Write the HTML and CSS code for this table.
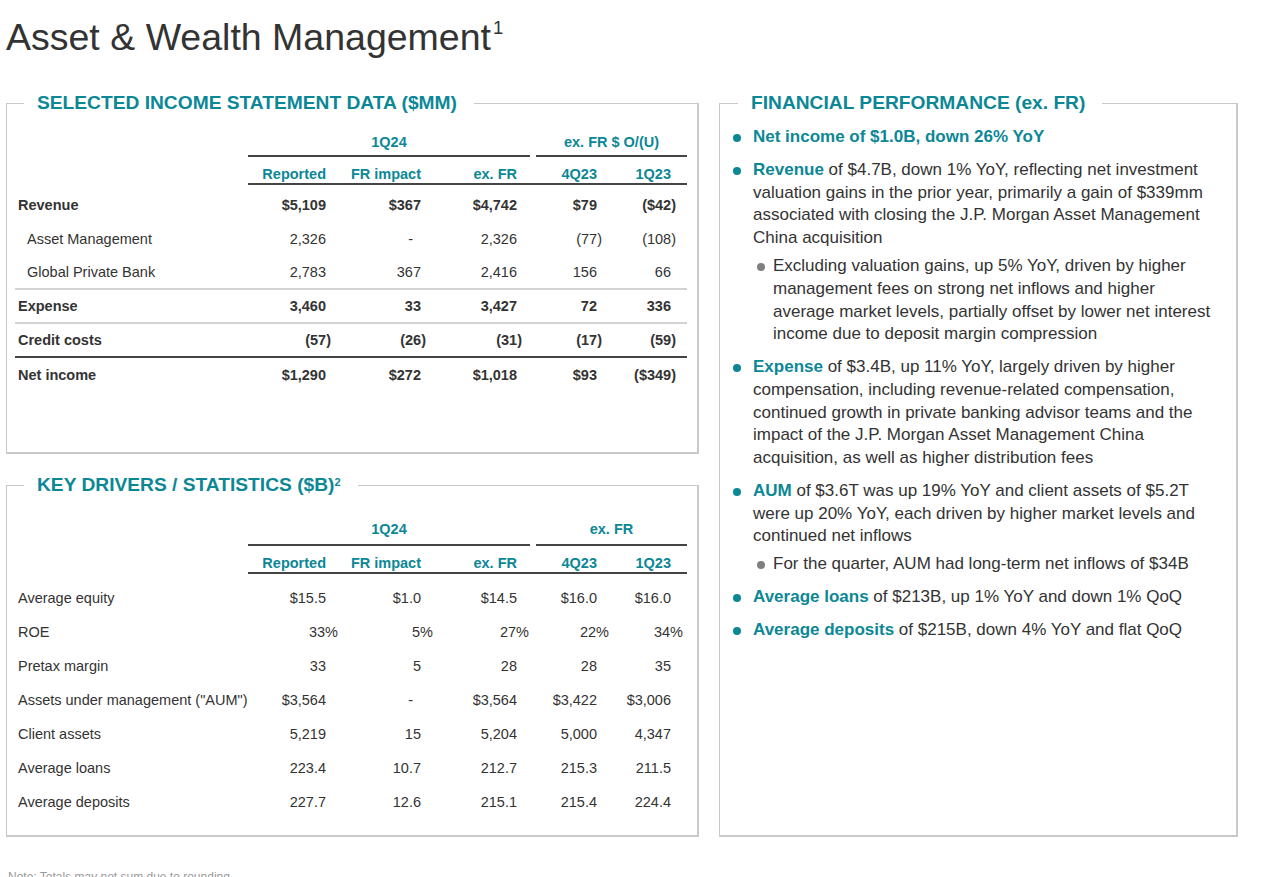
FILE: index.html
```html
<!DOCTYPE html>
<html lang="en">
<head>
<meta charset="utf-8">
<title>Asset &amp; Wealth Management</title>
<link rel="stylesheet" href="styles.css">
</head>
<body>
<div class="page">
  <h1 class="title">Asset &amp; Wealth Management<sup class="title-sup">1</sup></h1>
  <div class="columns">
    <div class="left-col">
      <fieldset class="panel panel-income">
        <legend class="panel-title">SELECTED INCOME STATEMENT DATA ($MM)</legend>
        <div class="tbl tbl-income">
          <div class="grow"><span></span><span class="grp grp-a">1Q24</span><span class="grp grp-b">ex. FR $ O/(U)</span></div>
          <div class="row colhead"><span></span><span>Reported</span><span>FR impact</span><span>ex. FR</span><span>4Q23</span><span>1Q23</span></div>
          <div class="tbody">
            <div class="row bold"><span class="lbl">Revenue</span><span>$5,109</span><span>$367</span><span>$4,742</span><span>$79</span><span><span class="neg">($42)</span></span></div>
            <div class="row"><span class="lbl sub">Asset Management</span><span>2,326</span><span><span class="dash">-</span></span><span>2,326</span><span><span class="neg">(77)</span></span><span><span class="neg">(108)</span></span></div>
            <div class="row line-light"><span class="lbl sub">Global Private Bank</span><span>2,783</span><span>367</span><span>2,416</span><span>156</span><span>66</span></div>
            <div class="row bold line-light"><span class="lbl">Expense</span><span>3,460</span><span>33</span><span>3,427</span><span>72</span><span>336</span></div>
            <div class="row bold line-dark"><span class="lbl">Credit costs</span><span><span class="neg">(57)</span></span><span><span class="neg">(26)</span></span><span><span class="neg">(31)</span></span><span><span class="neg">(17)</span></span><span><span class="neg">(59)</span></span></div>
            <div class="row bold"><span class="lbl">Net income</span><span>$1,290</span><span>$272</span><span>$1,018</span><span>$93</span><span><span class="neg">($349)</span></span></div>
          </div>
        </div>
      </fieldset>

      <fieldset class="panel panel-kd">
        <legend class="panel-title">KEY DRIVERS / STATISTICS ($B)<sup class="legend-sup">2</sup></legend>
        <div class="tbl tbl-kd">
          <div class="grow"><span></span><span class="grp grp-a">1Q24</span><span class="grp grp-b">ex. FR</span></div>
          <div class="row colhead"><span></span><span>Reported</span><span>FR impact</span><span>ex. FR</span><span>4Q23</span><span>1Q23</span></div>
          <div class="tbody">
            <div class="row"><span class="lbl">Average equity</span><span>$15.5</span><span>$1.0</span><span>$14.5</span><span>$16.0</span><span>$16.0</span></div>
            <div class="row"><span class="lbl">ROE</span><span>33<span class="pct">%</span></span><span>5<span class="pct">%</span></span><span>27<span class="pct">%</span></span><span>22<span class="pct">%</span></span><span>34<span class="pct">%</span></span></div>
            <div class="row"><span class="lbl">Pretax margin</span><span>33</span><span>5</span><span>28</span><span>28</span><span>35</span></div>
            <div class="row"><span class="lbl">Assets under management ("AUM")</span><span>$3,564</span><span><span class="dash">-</span></span><span>$3,564</span><span>$3,422</span><span>$3,006</span></div>
            <div class="row"><span class="lbl">Client assets</span><span>5,219</span><span>15</span><span>5,204</span><span>5,000</span><span>4,347</span></div>
            <div class="row"><span class="lbl">Average loans</span><span>223.4</span><span>10.7</span><span>212.7</span><span>215.3</span><span>211.5</span></div>
            <div class="row"><span class="lbl">Average deposits</span><span>227.7</span><span>12.6</span><span>215.1</span><span>215.4</span><span>224.4</span></div>
          </div>
        </div>
      </fieldset>
    </div>

    <fieldset class="panel panel-perf">
      <legend class="panel-title">FINANCIAL PERFORMANCE (ex. FR)</legend>
      <ul class="bullets">
        <li class="hl-all"><strong class="hl">Net income of $1.0B, down 26% YoY</strong></li>
        <li><strong class="hl">Revenue</strong> of $4.7B, down 1% YoY, reflecting net investment<br>valuation gains in the prior year, primarily a gain of $339mm<br>associated with closing the J.P. Morgan Asset Management<br>China acquisition
          <ul class="sub-bullets">
            <li>Excluding valuation gains, up 5% YoY, driven by higher<br>management fees on strong net inflows and higher<br>average market levels, partially offset by lower net interest<br>income due to deposit margin compression</li>
          </ul>
        </li>
        <li><strong class="hl">Expense</strong> of $3.4B, up 11% YoY, largely driven by higher<br>compensation, including revenue-related compensation,<br>continued growth in private banking advisor teams and the<br>impact of the J.P. Morgan Asset Management China<br>acquisition, as well as higher distribution fees</li>
        <li><strong class="hl">AUM</strong> of $3.6T was up 19% YoY and client assets of $5.2T<br>were up 20% YoY, each driven by higher market levels and<br>continued net inflows
          <ul class="sub-bullets">
            <li>For the quarter, AUM had long-term net inflows of $34B</li>
          </ul>
        </li>
        <li><strong class="hl">Average loans</strong> of $213B, up 1% YoY and down 1% QoQ</li>
        <li><strong class="hl">Average deposits</strong> of $215B, down 4% YoY and flat QoQ</li>
      </ul>
    </fieldset>
  </div>
  <div class="note">Note: Totals may not sum due to rounding</div>
</div>
</body>
</html>
```

FILE: styles.css
```css
html, body {
  margin: 0;
  padding: 0;
  background: #ffffff;
}

body {
  font-family: "Liberation Sans", Arial, sans-serif;
  color: #333333;
  overflow: hidden;
  height: 877px;
}

.page {
  padding: 15px 0 0 6px;
}

.title {
  margin: 0;
  font-size: 37.5px;
  line-height: 44px;
  font-weight: normal;
  color: #333333;
  white-space: nowrap;
}

.title-sup {
  font-size: 18.5px;
  line-height: 0;
  vertical-align: 16.5px;
  margin-left: 2px;
}

.columns {
  margin-top: 33px;
  display: flex;
  gap: 20px;
  align-items: flex-start;
}

.left-col {
  width: 693px;
  display: flex;
  flex-direction: column;
  gap: 20px;
}

.panel {
  box-sizing: border-box;
  margin: 0;
  padding: 0;
  border-style: solid;
  border-color: #c9c9c9;
  border-width: 1px 2px 2px 1px;
  min-width: 0;
}

.panel-title {
  font-size: 19.2px;
  line-height: 22px;
  font-weight: bold;
  color: #0b8796;
  padding: 0 17px 0 13px;
  margin-left: 17px;
  white-space: nowrap;
}

.legend-sup {
  font-size: 11px;
  line-height: 0;
  vertical-align: 5px;
}

.panel-income {
  height: 362px;
}

.panel-kd {
  height: 363px;
}

.panel-perf {
  width: 519px;
  height: 745px;
}

.panel-perf .panel-title {
  margin-left: 18px;
}

/* Tables */
.tbl {
  margin-left: 8px;
  width: 672px;
  font-size: 14.5px;
  line-height: 17px;
}

.grow {
  display: grid;
  grid-template-columns: 233px 285px 154px;
  font-weight: bold;
  color: #0b8796;
}

.grp {
  text-align: center;
  border-bottom: 2px solid #444444;
  padding-bottom: 4px;
  white-space: nowrap;
}

.grp-a {
  margin-right: 3px;
}

.grp-b {
  margin-left: 3px;
}

.tbl-income .grow {
  padding-top: 20px;
}

.tbl-kd .grow {
  padding-top: 25px;
}

.tbl-kd .grp {
  padding-bottom: 6px;
}

.row {
  display: grid;
  grid-template-columns: 233px 83px 95px 107px 72px 82px;
  align-items: center;
  box-sizing: border-box;
  height: 34px;
  white-space: nowrap;
}

.row > span {
  text-align: right;
}

.row > span:nth-child(2) { padding-right: 5px; }
.row > span:nth-child(3) { padding-right: 5px; }
.row > span:nth-child(4) { padding-right: 16px; }
.row > span:nth-child(5) { padding-right: 8px; }
.row > span:nth-child(6) { padding-right: 16px; }

.row > .lbl {
  text-align: left;
  padding-left: 3px;
}

.row > .lbl.sub {
  padding-left: 12px;
}

.colhead {
  height: auto;
  padding-top: 9px;
  font-weight: bold;
  color: #0b8796;
}

.colhead > span:not(:first-child) {
  border-bottom: 2px solid #444444;
}

.tbl-income .tbody {
  padding-top: 3px;
}

.tbl-kd .tbody {
  padding-top: 7px;
}

.bold {
  font-weight: bold;
}

.line-light {
  border-bottom: 2px solid #d2d2d2;
}

.line-dark {
  border-bottom: 2px solid #444444;
}

.neg {
  margin-right: -5px;
}

.pct {
  margin-right: -12px;
}

.dash {
  margin-right: 8px;
}

/* Bullets */
.bullets {
  list-style: none;
  margin: 0;
  padding: 12px 0 0 33px;
  font-size: 17px;
  line-height: 22.7px;
  color: #333333;
  white-space: nowrap;
}

.bullets > li {
  position: relative;
}

.bullets > li + li {
  margin-top: 10.3px;
}

.bullets > li::before {
  content: "";
  position: absolute;
  left: -20px;
  top: 7.5px;
  width: 8px;
  height: 8px;
  border-radius: 50%;
  background: #0b8796;
}

.hl {
  color: #0b8796;
  font-weight: bold;
}

.sub-bullets {
  list-style: none;
  margin: 5.3px 0 0 0;
  padding-left: 20px;
}

.sub-bullets > li {
  position: relative;
}

.sub-bullets > li::before {
  content: "";
  position: absolute;
  left: -16px;
  top: 7.5px;
  width: 8px;
  height: 8px;
  border-radius: 50%;
  background: #7f7f7f;
}

.note {
  margin-top: 33px;
  margin-left: 2px;
  font-size: 12px;
  line-height: 14px;
  color: #9a9a9a;
}
```
